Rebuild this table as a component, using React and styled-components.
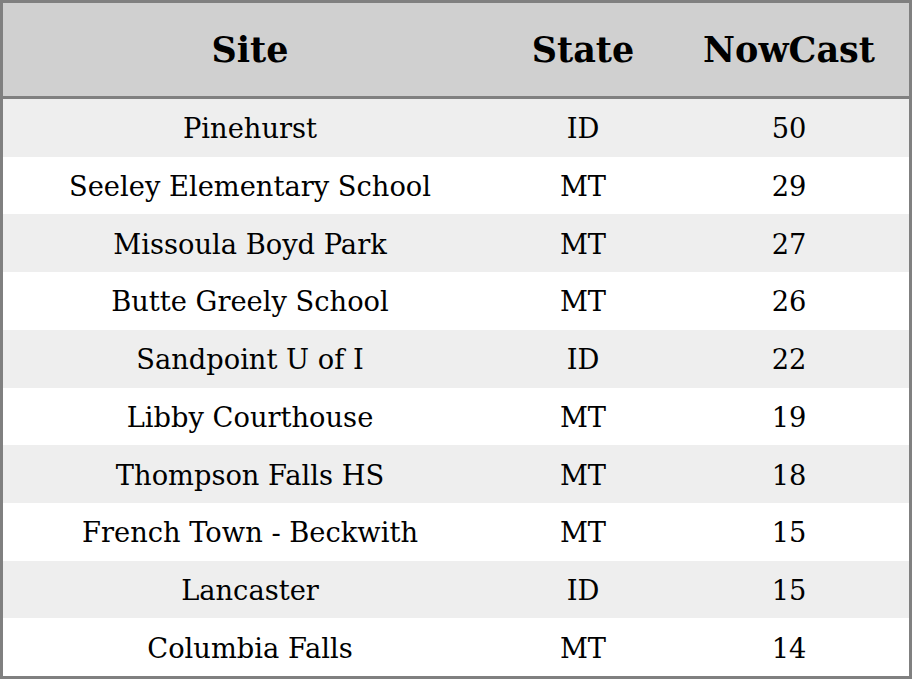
import React from "react";
import styled, { createGlobalStyle } from "styled-components";

const rows = [
  { site: "Pinehurst", state: "ID", nowcast: 50 },
  { site: "Seeley Elementary School", state: "MT", nowcast: 29 },
  { site: "Missoula Boyd Park", state: "MT", nowcast: 27 },
  { site: "Butte Greely School", state: "MT", nowcast: 26 },
  { site: "Sandpoint U of I", state: "ID", nowcast: 22 },
  { site: "Libby Courthouse", state: "MT", nowcast: 19 },
  { site: "Thompson Falls HS", state: "MT", nowcast: 18 },
  { site: "French Town - Beckwith", state: "MT", nowcast: 15 },
  { site: "Lancaster", state: "ID", nowcast: 15 },
  { site: "Columbia Falls", state: "MT", nowcast: 14 },
];

const GlobalStyle = createGlobalStyle`
  html, body {
    margin: 0;
    padding: 0;
    background: #fff;
  }
  * {
    box-sizing: border-box;
  }
`;

const Table = styled.div`
  width: 912px;
  height: 679px;
  border: 3px solid #808080;
  display: grid;
  grid-template-columns: 494px 172px 1fr;
  grid-template-rows: 96px repeat(10, 1fr);
  font-family: "DejaVu Serif", serif;
  color: #000;
`;

const HeadCell = styled.div`
  background: #d0d0d0;
  border-bottom: 3px solid #808080;
  display: flex;
  align-items: center;
  justify-content: center;
  font-size: 35px;
  font-weight: bold;
`;

const Cell = styled.div`
  background: ${(props) => (props.$striped ? "#eeeeee" : "#ffffff")};
  display: flex;
  align-items: center;
  justify-content: center;
  padding-top: 2px;
  font-size: 27.3px;
`;

const App = () => {
  return (
    <>
      <GlobalStyle />
      <Table>
        <HeadCell>Site</HeadCell>
        <HeadCell>State</HeadCell>
        <HeadCell>NowCast</HeadCell>
        {rows.map((item, i) => (
          <React.Fragment key={item.site}>
            <Cell $striped={i % 2 === 0}>{item.site}</Cell>
            <Cell $striped={i % 2 === 0}>{item.state}</Cell>
            <Cell $striped={i % 2 === 0}>{item.nowcast}</Cell>
          </React.Fragment>
        ))}
      </Table>
    </>
  );
};

export default App;
